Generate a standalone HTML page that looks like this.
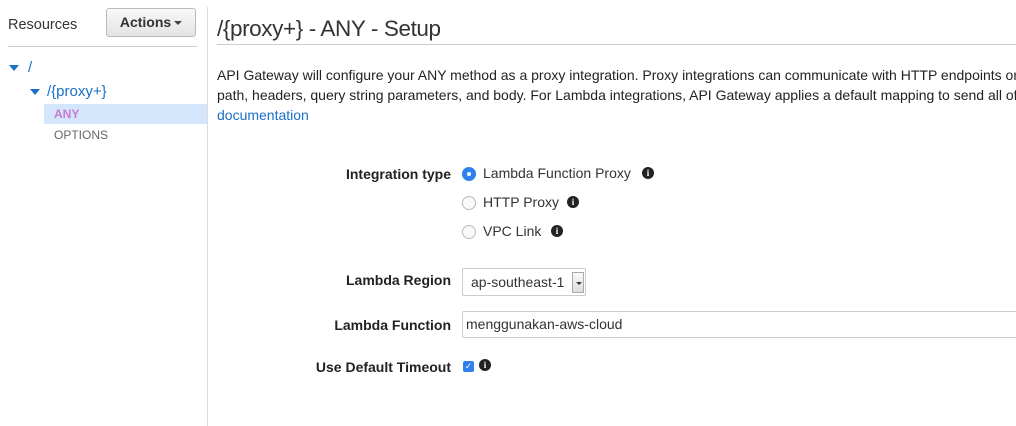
<!DOCTYPE html>
<html><head><style>
*{margin:0;padding:0;box-sizing:border-box}
body{width:1016px;height:426px;overflow:hidden;background:#fff;font-family:"Liberation Sans",Arial,sans-serif;color:#333;position:relative;font-size:13px}
.a{position:absolute;white-space:nowrap}
.tri{position:absolute;width:0;height:0;border-left:5px solid transparent;border-right:5px solid transparent;border-top:6px solid #1a6fc6}
.lbl{position:absolute;right:565px;font-weight:bold;font-size:14px;color:#222}
.radio{position:absolute;left:462px;width:14px;height:14px;border-radius:50%;border:1px solid #bbb;background:#fafafa}
.info{position:absolute;width:12px;height:12px;border-radius:50%;background:#222;color:#fff;font:bold 9px "Liberation Serif",serif;text-align:center;line-height:12px}
</style></head><body>
<div class="a" style="left:8px;top:17px;font-size:14.5px;color:#333">Resources</div>
<div class="a" style="left:106px;top:8px;width:90px;height:29px;border:1px solid #bbb;border-radius:3px;background:linear-gradient(#f8f8f8,#e4e4e4);font-weight:bold;font-size:14px;color:#333;text-align:center;line-height:27px">Actions<span style="display:inline-block;width:0;height:0;border-left:4px solid transparent;border-right:4px solid transparent;border-top:4px solid #444;vertical-align:middle;margin-left:3px"></span></div>
<div class="a" style="left:8px;top:46px;width:189px;height:1px;background:#ccc"></div>
<div class="a" style="left:207px;top:7px;width:1px;height:419px;background:#ddd"></div>
<div class="tri" style="left:9px;top:65px"></div>
<div class="a" style="left:28px;top:59px;font-size:15px;color:#1a6fc6">/</div>
<div class="tri" style="left:30px;top:89px"></div>
<div class="a" style="left:47px;top:83px;font-size:15px;color:#1a6fc6">/{proxy+}</div>
<div class="a" style="left:44px;top:104px;width:163px;height:20px;background:#d3e6fb"></div>
<div class="a" style="left:54px;top:107px;font-size:12px;font-weight:bold;color:#c77bd1">ANY</div>
<div class="a" style="left:54px;top:128px;font-size:12px;color:#666">OPTIONS</div>

<div class="a" style="left:217px;top:16px;font-size:22.5px;color:#333;letter-spacing:-0.4px">/{proxy+} - ANY - Setup</div>
<div class="a" style="left:217px;top:44px;width:799px;height:1px;background:#ccc"></div>
<div class="a" style="left:217px;top:65px;font-size:14px;line-height:20px;color:#222">API Gateway will configure your ANY method as a proxy integration. Proxy integrations can communicate with HTTP endpoints or<br>path, headers, query string parameters, and body. For Lambda integrations, API Gateway applies a default mapping to send all of<br><span style="color:#1a6fc6">documentation</span></div>

<div class="lbl" style="top:166px">Integration type</div>
<div class="radio" style="top:167px;border-color:#2f80ed;background:#2f80ed"><div style="position:absolute;left:4px;top:4px;width:4px;height:4px;border-radius:50%;background:#fff"></div></div>
<div class="a" style="left:483px;top:165px;font-size:14px">Lambda Function Proxy</div>
<div class="info" style="left:642px;top:167px">i</div>
<div class="radio" style="top:196px"></div>
<div class="a" style="left:483px;top:194px;font-size:14px">HTTP Proxy</div>
<div class="info" style="left:567px;top:196px">i</div>
<div class="radio" style="top:225px"></div>
<div class="a" style="left:483px;top:223px;font-size:14px">VPC Link</div>
<div class="info" style="left:551px;top:225px">i</div>

<div class="lbl" style="top:272px">Lambda Region</div>
<div class="a" style="left:462px;top:268px;width:124px;height:28px;border:1px solid #ccc;border-radius:2px;font-size:14px;padding:5px 0 0 8px">ap-southeast-1</div>
<div class="a" style="left:572px;top:272px;width:12px;height:21px;border:1px solid #aaa;background:linear-gradient(#fafafa,#ddd)"><div style="position:absolute;left:3px;top:9px;border-left:3px solid transparent;border-right:3px solid transparent;border-top:3px solid #333"></div></div>

<div class="lbl" style="top:317px">Lambda Function</div>
<div class="a" style="left:462px;top:311px;width:560px;height:27px;border:1px solid #ccc;border-radius:2px;font-size:14px;padding:4px 0 0 3px">menggunakan-aws-cloud</div>

<div class="lbl" style="top:359px">Use Default Timeout</div>
<div class="a" style="left:463px;top:361px;width:11px;height:11px;border-radius:2px;background:#2f80ed;color:#fff;font-size:9px;line-height:11px;text-align:center">✓</div>
<div class="info" style="left:479px;top:359px">i</div>
</body></html>
